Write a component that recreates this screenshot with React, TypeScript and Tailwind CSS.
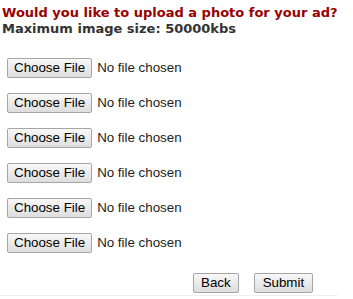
import React from "react";

const btn =
  "h-[20px] border border-[#a6a6a6] rounded-[2px] bg-gradient-to-b from-[#f8f8f8] to-[#dddddd] text-[13.33px] leading-none text-black whitespace-nowrap";

function FileRow() {
  return (
    <div className="flex items-center h-[20px]">
      <button className={btn + " px-[6px]"}>Choose File</button>
      <span className="ml-[5px] text-[13.33px] text-[#222]">No file chosen</span>
    </div>
  );
}

export default function App() {
  return (
    <div className="w-[353px] h-[299px] bg-white overflow-hidden" style={{ fontFamily: '"Liberation Sans", Arial, sans-serif' }}>
      <div className="pl-[2px] pt-[5px] text-[13px] leading-[16px] font-bold" style={{ fontFamily: '"DejaVu Sans", Verdana, sans-serif' }}>
        <div className="text-[#990000]">Would you like to upload a photo for your ad?</div>
        <div className="text-[#333333]">Maximum image size: 50000kbs</div>
      </div>
      <div className="pl-[7px] pt-[21px] flex flex-col gap-[15px]">
        <FileRow />
        <FileRow />
        <FileRow />
        <FileRow />
        <FileRow />
        <FileRow />
      </div>
      <div className="w-[337px] border-b border-[#eeeeee] pt-[20px] pb-[2px] flex pl-[193px] gap-[15px]">
        <button className={btn + " px-[7px]"}>Back</button>
        <button className={btn + " px-[8px]"}>Submit</button>
      </div>
    </div>
  );
}
